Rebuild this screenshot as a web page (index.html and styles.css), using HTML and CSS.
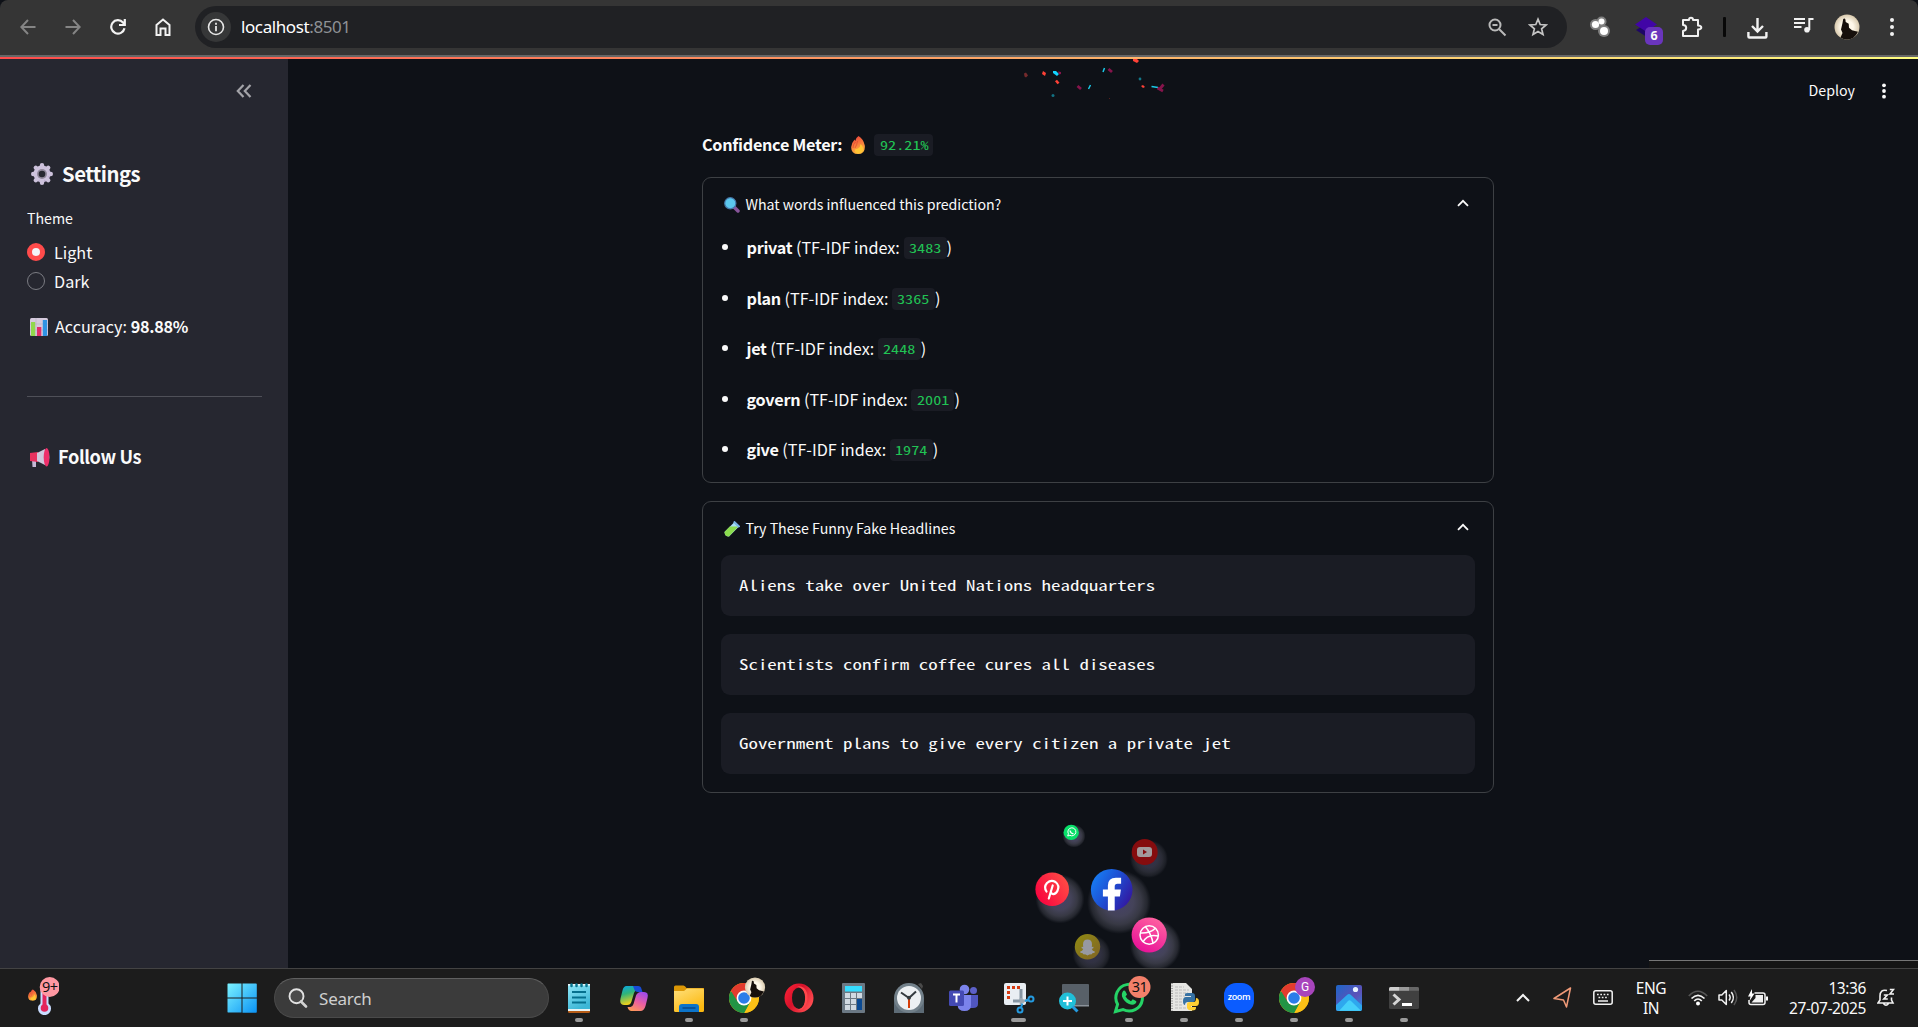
FILE: index.html
```html
<!DOCTYPE html>
<html lang="en">
<head>
<meta charset="utf-8">
<title>localhost:8501</title>
<link rel="stylesheet" href="styles.css">
</head>
<body>
<svg width="0" height="0" class="defs" aria-hidden="true">
  <defs>
    <symbol id="chrome" viewBox="0 0 30 30">
      <circle cx="15" cy="15" r="15" fill="#fbbc04"/>
      <path d="M15 15 L1.6 8.2 A15 15 0 0 0 15.5 30 L21.5 18.8Z" fill="#229445"/>
      <path d="M1.9 7.8 A15 15 0 0 1 28.2 8 L15 8.2 L8.5 18.6Z" fill="#e33b2e"/>
      <path d="M15 8 H28.2 A15 15 0 0 1 15.3 30 L21.5 18.8Z" fill="#fbc116"/>
      <circle cx="15" cy="15" r="7.4" fill="#fff"/><circle cx="15" cy="15" r="5.8" fill="#2b7de9"/>
    </symbol>
    <radialGradient id="avatarBg"><stop offset=".5" stop-color="#fff8ea"/><stop offset="1" stop-color="#d8c9ad"/></radialGradient>
    <symbol id="avatar" viewBox="0 0 26 26">
      <circle cx="13" cy="13" r="12.5" fill="url(#avatarBg)"/>
      <path d="M9.200 5q1.500-1.200 2.200.5l.3 2.500 3 1.800.3 4 3 2.500 6 1.500Q20.500 25.500 13 25.500 9 25.300 6.500 23.500L8.500 19 7 15.500 8.500 9Z" fill="#160f0b"/>
    </symbol>
    <linearGradient id="winG" x2="1" y2="1"><stop stop-color="#7cf3ff"/><stop offset="1" stop-color="#0a92f5"/></linearGradient>
    <linearGradient id="cop1" x1="0" y1="0" x2=".3" y2="1"><stop stop-color="#08a6e8"/><stop offset=".45" stop-color="#2fb47a"/><stop offset="1" stop-color="#f5d319"/></linearGradient>
    <linearGradient id="cop2" x1=".7" y1="0" x2=".2" y2="1"><stop stop-color="#a24be8"/><stop offset=".5" stop-color="#ec5fa0"/><stop offset="1" stop-color="#ff9a55"/></linearGradient>
    <linearGradient id="folder" x2=".6" y2="1"><stop stop-color="#ffe07c"/><stop offset="1" stop-color="#fcb910"/></linearGradient>
    <linearGradient id="opera" x2="1" y2=".6"><stop stop-color="#ff2438"/><stop offset=".5" stop-color="#d6112a"/><stop offset="1" stop-color="#ff4b50"/></linearGradient>
    <linearGradient id="note" y2="1" x2=".5"><stop stop-color="#8fe6f7"/><stop offset="1" stop-color="#3cb6d6"/></linearGradient>
    <linearGradient id="photo" x2="1" y2="1"><stop stop-color="#1e66c8"/><stop offset=".6" stop-color="#5d51b8"/><stop offset="1" stop-color="#2491e6"/></linearGradient>
    <linearGradient id="fb" x1="0" y1=".2" x2="1" y2=".8"><stop stop-color="#1680f5"/><stop offset=".5" stop-color="#1f4bd0"/><stop offset="1" stop-color="#34129b"/></linearGradient>
    <linearGradient id="pin" x1="0" y1=".8" x2="1" y2=".2"><stop stop-color="#f8003f"/><stop offset="1" stop-color="#ff4f45"/></linearGradient>
    <linearGradient id="dri" x1=".2" y1="1" x2=".7" y2="0"><stop stop-color="#e70c97"/><stop offset="1" stop-color="#ff62a0"/></linearGradient>
    <linearGradient id="snap" y2="1"><stop stop-color="#908b12"/><stop offset="1" stop-color="#806326"/></linearGradient>
    <linearGradient id="gearG" x2="1" y2="1"><stop stop-color="#d9d0e6"/><stop offset="1" stop-color="#b5a3cb"/></linearGradient>
    <linearGradient id="fireG" y2="1" x2=".3"><stop stop-color="#e63a3c"/><stop offset=".45" stop-color="#f6713c"/><stop offset="1" stop-color="#ffb23c"/></linearGradient>
    <radialGradient id="glow"><stop offset="0" stop-color="#46416a"/><stop offset=".45" stop-color="#444359"/><stop offset=".7" stop-color="#3a3b47" stop-opacity=".95"/><stop offset=".88" stop-color="#34363f" stop-opacity=".6"/><stop offset="1" stop-color="#2c2e38" stop-opacity="0"/></radialGradient>
    <symbol id="fire" viewBox="0 0 14 18">
      <path d="M7.500 0Q12.500 3 13.800 9.500 14.500 18 7 18 0 18 .2 11 .5 7 3.500 3.500L4.200 5Q5 1.500 7.500 0Z" fill="url(#fireG)"/>
      <path d="M9.500 8Q13 11 12 14.500 10.500 17.500 7.500 17.500 3.500 17 3.800 13.500L7 12.500Q9.500 11 9.500 8Z" fill="#ffc634"/>
      <path d="M2 12Q2 8 4.500 6M4 12Q6 9 6.500 5" stroke="#d9402f" stroke-width=".6" fill="none"/>
    </symbol>
  </defs>
</svg>

<header class="browser">
  <nav class="nav">
    <span class="nav-cell"><svg width="16" height="16" viewBox="0 0 16 16" fill="none" stroke="#858585" stroke-width="2"><path d="M15.500 8H1.500M8 1 1.300 8 8 15"/></svg></span>
    <span class="nav-cell"><svg width="16" height="16" viewBox="0 0 16 16" fill="none" stroke="#858585" stroke-width="2"><path d="M.5 8h14M8 1l6.700 7L8 15"/></svg></span>
    <span class="nav-cell"><svg width="16" height="16" viewBox="0 0 16 16" fill="none" stroke="#f2f2f2" stroke-width="2.200"><path d="M14.500 9.300A6.700 6.700 0 1 1 13 3.500L14.800 5.500M14.800 0V6H9"/></svg></span>
    <span class="nav-cell"><svg width="16" height="18" viewBox="0 0 16 18" fill="none" stroke="#f2f2f2" stroke-width="2"><path d="M1.500 7 8 1.500 14.500 7V17H10.500V10.500h-5V17h-4Z"/></svg></span>
  </nav>
  <div class="address">
    <span class="info"><svg width="18" height="18" viewBox="0 0 18 18"><circle cx="9" cy="9" r="7.500" fill="none" stroke="#e6e6e6" stroke-width="1.600"/><path d="M9 8v5.200M9 4.800v1.900" stroke="#e6e6e6" stroke-width="1.800"/></svg></span>
    <span class="url">localhost<span class="port">:8501</span></span>
    <svg class="zoom-out" width="19" height="19" viewBox="0 0 19 19" fill="none" stroke="#b9b9b9" stroke-width="2"><circle cx="7" cy="7" r="5.500"/><path d="M11 11 17.500 17.500M4.500 7h5"/></svg>
    <svg class="star" width="20" height="20" viewBox="0 0 20 20" fill="none" stroke="#c4c4c4" stroke-width="1.700"><path d="M10 2.200 12.200 7.500 18 8 13.600 11.800 15 17.400 10 14.400 5 17.400 6.400 11.800 2 8 7.800 7.500Z"/></svg>
  </div>
  <div class="extensions">
    <svg width="22" height="22" viewBox="0 0 22 22"><g fill="#999" opacity=".75"><circle cx="6.500" cy="8.500" r="5.500"/><circle cx="12.500" cy="5.500" r="5"/><circle cx="15" cy="15" r="6"/></g><g fill="#fff"><circle cx="6.500" cy="8.500" r="3.600"/><circle cx="12.500" cy="5.500" r="3"/><circle cx="15" cy="15" r="4"/></g></svg>
    <span class="cube"><svg width="22" height="22" viewBox="0 0 22 22"><path d="M1 14 11 8l10 6-10 6.500Z" fill="#1e0666"/><path d="M0 8.500 11 1l11 7.500L11 15.500Z" fill="#4105a6"/></svg><b class="badge">6</b></span>
    <svg class="puzzle" width="22" height="22" viewBox="0 0 22 22" fill="none" stroke="#f0f0f0" stroke-width="2"><path d="M2 4h6Q8 1.800 10 1.800T12 4h5V9.500q3.300.2 3.300 2T17 13.500V20H2V15q3.200-.4 3.200-3.200T2 9Z" stroke-linejoin="round"/></svg>
    <i class="divider"></i>
    <svg class="download" width="21" height="21" viewBox="0 0 21 21" fill="none" stroke="#f2f2f2" stroke-width="2.400"><path d="M10.500 0v13M5 8l5.500 5.500L16 8M1.400 14v4.500q0 1 1 1h16q1 0 1-1V14"/></svg>
    <svg class="music" width="20" height="17" viewBox="0 0 20 17" fill="none" stroke="#f2f2f2" stroke-width="2"><path d="M0 2h11M0 6h11M0 10h7.500M15.300 13V2H19.500"/><circle cx="13" cy="12.700" r="2.800" fill="#f2f2f2" stroke="none"/></svg>
    <svg class="profile" width="26" height="26"><use href="#avatar"/></svg>
    <svg class="more" width="6" height="20" viewBox="0 0 6 20" fill="#f2f2f2"><circle cx="3" cy="3" r="2"/><circle cx="3" cy="10" r="2"/><circle cx="3" cy="17" r="2"/></svg>
  </div>
</header>

<div class="app">
  <aside class="sidebar">
    <div class="collapse"><svg width="16" height="14" viewBox="0 0 16 14" fill="none" stroke="#a3a3a8" stroke-width="2.200"><path d="M7.500 1 1.800 7 7.500 13M14.500 1 8.800 7l5.700 6"/></svg></div>
    <h2 class="settings"><svg width="22" height="22" viewBox="0 0 22 22"><g fill="url(#gearG)"><circle cx="11" cy="11" r="8.500"/><g stroke="#cdc2dc" stroke-width="4.400" stroke-linecap="round"><path d="M11 2.200v17.600M2.200 11h17.600M4.800 4.800l12.400 12.400M17.200 4.800 4.800 17.200"/></g></g><circle cx="11" cy="11" r="5" fill="#8f8799"/><circle cx="11" cy="11" r="3.300" fill="#262730"/></svg><span>Settings</span></h2>
    <div class="theme-label">Theme</div>
    <div class="option"><i class="radio on"></i>Light</div>
    <div class="option"><i class="radio"></i>Dark</div>
    <p class="accuracy"><svg width="18" height="18" viewBox="0 0 18 18"><rect width="18" height="18" rx="1.500" fill="#d5cadd"/><path d="M0 6h18M0 12h18M6 0v18" stroke="#b9aec5" stroke-width=".6"/><rect x="1" y="4" width="4.200" height="14" fill="#91d84c"/><rect x="7" y="9" width="4.300" height="9" fill="#e22e69"/><rect x="12.800" y="2" width="4.300" height="16" fill="#2f94e4"/></svg><span>Accuracy: <b>98.88%</b></span></p>
    <hr>
    <h3 class="follow"><svg width="20" height="19" viewBox="0 0 20 19"><path d="M2 11h4v8H2.500Z" fill="#c5b8d5"/><path d="M0 5 8 4v10L0 13Z" fill="#e8315f"/><path d="M7 5 15 1v16L7 13Z" fill="#cfc7dc"/><ellipse cx="16.600" cy="9.300" rx="2.900" ry="9.200" fill="#ee2f6b"/><path d="M19 7q1.500 2 0 4.500" fill="#696070"/></svg><span>Follow Us</span></h3>
  </aside>

  <main class="main">
    <div class="app-bar"><span>Deploy</span><svg width="6" height="16" viewBox="0 0 6 16" fill="#fafafa"><circle cx="3" cy="2.300" r="1.900"/><circle cx="3" cy="8" r="1.900"/><circle cx="3" cy="13.700" r="1.900"/></svg></div>
    <section class="content">
      <p class="confidence"><b>Confidence Meter:</b><svg width="14" height="18"><use href="#fire"/></svg><code class="percent"><span>92.21%</span></code></p>
      <article class="card words">
        <header class="card-head"><svg width="16" height="16" viewBox="0 0 16 16"><path d="M10 10l4 4" stroke="#87549a" stroke-width="3.500" stroke-linecap="round"/><circle cx="6.300" cy="6.300" r="5.600" fill="#5bc8ee" stroke="#4676a8" stroke-width="1.200"/></svg><span>What words influenced this prediction?</span><svg class="chev" width="12" height="8" viewBox="0 0 12 8"><path d="M1 6.800 6 1.800l5 5" fill="none" stroke="#fafafa" stroke-width="1.800"/></svg></header>
        <ul>
          <li><b>privat</b> (TF-IDF index: <code><span>3483</span></code>)</li>
          <li><b>plan</b> (TF-IDF index: <code><span>3365</span></code>)</li>
          <li><b>jet</b> (TF-IDF index: <code><span>2448</span></code>)</li>
          <li><b>govern</b> (TF-IDF index: <code><span>2001</span></code>)</li>
          <li><b>give</b> (TF-IDF index: <code><span>1974</span></code>)</li>
        </ul>
      </article>
      <article class="card headlines">
        <header class="card-head"><svg width="16" height="16" viewBox="0 0 16 16"><path d="M10 1.500 14.500 6 5 15.500Q1 15.500.5 11Z" fill="#a8dff5"/><path d="M5.800 5.600h8.500L5 15.500Q.5 15.500.5 11Z" fill="#8bdc4e"/><path d="M9.800.5 15.500 6" stroke="#79b5e8" stroke-width="2"/></svg><span>Try These Funny Fake Headlines</span><svg class="chev" width="12" height="8" viewBox="0 0 12 8"><path d="M1 6.800 6 1.800l5 5" fill="none" stroke="#fafafa" stroke-width="1.800"/></svg></header>
        <pre><span>Aliens take over United Nations headquarters</span></pre>
        <pre><span>Scientists confirm coffee cures all diseases</span></pre>
        <pre><span>Government plans to give every citizen a private jet</span></pre>
      </article>
    </section>

    <svg class="confetti" width="150" height="50" viewBox="1020 59 150 50">
      <g fill="#ff4136"><path d="M1042 71l3 2-1 3-3-2Z" transform="translate(1)"/><path d="M1133 58h3l3 3-2 2-4-2Z"/><path d="M1141 86l2-1 2 2-2 1Z"/></g>
      <path d="M1024 73.500l2-1 2 3-2 2-1.500-1Z" fill="#742a2c"/>
      <path d="M1053 71h3l3 3-2 2-4-3Z" fill="#12d3ff"/><path d="M1058 71.500l3 .5v2l-2 .5Z" fill="#85144b"/>
      <path d="M1104.500 68 1103 72M1090.500 85 1088.500 89M1151.500 86.500 1158 87.500" stroke="#1bc9e8" stroke-width="1.500"/>
      <path d="M1108.500 69 1112 72M1077.500 86 1081 89M1157.500 88 1163 91M1163.500 84.500 1159 90" stroke="#85144b" stroke-width="2.800"/>
      <circle cx="1140" cy="79" r="1.400" fill="#137788"/><circle cx="1053" cy="95.500" r="1.500" fill="#127283"/><circle cx="1109.500" cy="98.500" r=".5" fill="#6d2420"/>
      <path d="M1056 80.500 1058.500 83.500" stroke="#ff4136" stroke-width="2.600"/>
    </svg>

    <svg class="social" width="220" height="168" viewBox="1000 800 220 168">
      <g fill="url(#glow)">
        <circle cx="1074" cy="836" r="11.500"/><circle cx="1149" cy="859" r="19" opacity=".65"/><circle cx="1060" cy="899" r="24.500"/><circle cx="1119" cy="902" r="32"/><circle cx="1155.500" cy="945.500" r="25.500"/><circle cx="1091.500" cy="954" r="19" opacity=".65"/>
      </g>
      <circle cx="1071.200" cy="832.400" r="7.700" fill="#08df69"/>
      <path d="M1067.700 836l.7-2.200a4 4 0 1 1 1.500 1.500Z" fill="none" stroke="#fff" stroke-width="1"/><path d="M1070 830.500q.5 3 3.500 3.300" stroke="#fff" stroke-width="1.300" fill="none"/>
      <circle cx="1144.700" cy="852" r="13" fill="#850c0e"/>
      <rect x="1137" y="847" width="15" height="10" rx="3" fill="#a29a9c"/><path d="M1143 849.500v5l4-2.500Z" fill="#850c0e"/>
      <circle cx="1052.200" cy="889.300" r="16.800" fill="url(#pin)"/>
      <path d="M1046.500 891.500q-3-4.500.5-8.500 4-3.500 8.500-1 4.500 3.500 2 8.700-2 4-5 3.300-2-.8-1.600-3M1052.700 885.500 1048.800 898.500" fill="none" stroke="#fff" stroke-width="2.200" stroke-linecap="round"/>
      <circle cx="1111.700" cy="889.700" r="20.800" fill="url(#fb)"/>
      <path d="M1107.900 910.500V896.500h-5V889.500h5v-4q0-7.800 8-7.800h5.200v6h-3.700q-2.700 0-2.700 2.800v3h6.200l-1 7h-5.200v14Z" fill="#fff"/>
      <circle cx="1149.200" cy="935" r="17.600" fill="url(#dri)"/>
      <g fill="none" stroke="#fff" stroke-width="1.500"><circle cx="1149.200" cy="935" r="9.200"/><path d="M1140.200 933q10 .5 15.500-5M1145.500 926.700q6 7.500 7.500 16.500M1143 942q4.500-8.500 15.300-6"/></g>
      <circle cx="1087.500" cy="946.700" r="12.700" fill="url(#snap)"/>
      <path d="M1087.500 939.500q4.500 0 4.500 5l-.2 2.500 1.500-.3.200 1.200-1.700 1q.7 2 3 2.600l-.2 1.300-2.300.4-.5 1-2.500.2-1.800 1.200-1.800-1.200-2.500-.2-.5-1-2.300-.4-.2-1.300q2.300-.6 3-2.600l-1.700-1 .2-1.200 1.500.3-.2-2.500q0-5 4.500-5Z" fill="#9799a2"/>
    </svg>
    <div class="window-edge"></div>
  </main>
</div>

<footer class="taskbar">
  <svg class="weather" width="34" height="40" viewBox="25 975 34 40"><svg x="28" y="989" width="9" height="12" viewBox="0 0 14 18"><use href="#fire" width="14" height="18"/></svg><path d="M40.500 1003.500V985h8v18.500a6.500 6.500 0 1 1-8 0Z" fill="#c9dcff"/><circle cx="44.500" cy="1008" r="3.800" fill="#e3245c"/><path d="M44.500 992v14" stroke="#e3245c" stroke-width="4"/><circle cx="49.700" cy="987" r="10" fill="#ff98a2"/><text x="49.800" y="992.300" text-anchor="middle" class="badge-text">9+</text></svg>
  <svg class="start" width="30" height="30" viewBox="0 0 30 30"><path d="M1 .5h13.500v14H.5V1ZM15.500.5H29a.8.800 0 0 1 .8.800v13.200H15.500ZM.5 15.500h14v14H1a.8.800 0 0 1-.5-.8ZM15.500 15.500h14.300V29q0 .7-.8.700H15.500Z" fill="url(#winG)"/></svg>
  <div class="search"><svg width="20" height="20" viewBox="0 0 20 20" fill="none"><circle cx="8.500" cy="8.200" r="7" stroke="#e2e2e2" stroke-width="1.900" fill="#4b4b4b"/><path d="M13 13.500 18 18.500" stroke="#d2d2d2" stroke-width="2.600" stroke-linecap="round"/></svg><span>Search</span></div>
  <div class="apps">
    <span class="task run"><svg width="36" height="38" viewBox="0 0 36 38"><rect x="7" y="7" width="22" height="28" rx="1.500" fill="#b65c17"/><rect x="7" y="6" width="22" height="27" fill="#e8f4f6"/><path d="M7 7.500h22V31H7Z" fill="url(#note)"/><path d="M11 14h14M11 19.500h14M11 24.500h14" stroke="#05708e" stroke-width="2"/><g stroke="#07758f" stroke-width="2.500" stroke-linecap="round"><path d="M10.500 6.500v1.500M15.500 6.500v1.500M20.500 6.500v1.500M25.500 6.500v1.500"/></g></svg></span>
    <span class="task"><svg width="36" height="38" viewBox="0 0 36 38"><path d="M10.500 8H20q3 0 4 4h-3q-2 0-3 3l-2.500 8.500Q14.500 27 11 27H8Q3 27 4.500 20.500l2-8Q7.500 8 10.500 8Z" fill="url(#cop1)"/><path d="M17 8h5q3 0 3.500 3l1 3h-5q-2 0-3-2Z" fill="#184cd6"/><path d="M25 14h3q5 0 3.500 6l-2 8q-1.500 5-5 5h-9q-3 0-4-4h3q2 0 3-3l2.500-8.500Q21.500 14 25 14Z" fill="url(#cop2)"/></svg></span>
    <span class="task run"><svg width="36" height="38" viewBox="0 0 36 38"><path d="M3 9q0-1.500 1.500-1.500h8q1.500 0 3 2.500H33v8H3Z" fill="#dc9705"/><path d="M3 13h10l3-2.500h15.500q1.500 0 1.500 1.500v20.500q0 1.500-1.500 1.500h-27Q3 34 3 32.500Z" fill="url(#folder)"/><path d="M8 34v-5q0-3 3-3h14q3 0 3 3v5Z" fill="#0c74ca"/><path d="M11.500 30h13" stroke="#07488a" stroke-width="1.500"/></svg></span>
    <span class="task run"><svg width="40" height="38" viewBox="-2 0 40 38"><use href="#chrome" x="3" y="5" width="30" height="30"/><use href="#avatar" x="18.500" y="-1" width="21" height="21"/></svg></span>
    <span class="task"><svg width="36" height="38" viewBox="0 0 36 38"><path fill-rule="evenodd" d="M18 5.500a14.500 14.500 0 1 0 0 29 14.500 14.500 0 0 0 0-29ZM18 9.500q6.500 1.500 6.500 10.500T18 31q-7-1.500-7-11T18 9.500Z" fill="url(#opera)"/><path d="M16 9q3-2 7 1 4 4 3.500 10.500T21 31.500q-3 .8-5-.5 6 1 7.500-6t-1-12Q20 9 16 9Z" fill="#ff484c"/></svg></span>
    <span class="task"><svg width="36" height="38" viewBox="1 0 36 38"><rect x="7" y="5" width="23" height="30" rx="1" fill="#6b7884"/><rect x="10" y="8" width="17" height="5.500" fill="#35dcff"/><g fill="#d0d9e2"><path d="M10 15h5v5h-5ZM16 15h5v5h-5ZM22 15h5v5h-5ZM10 21h5v5h-5ZM16 21h5v5h-5ZM10 27h5v5h-5ZM16 27h5v5h-5Z"/></g><path d="M22 21h5v11h-5Z" fill="#0b4a93"/></svg></span>
    <span class="task"><svg width="36" height="38" viewBox="0 0 36 38"><path d="M3 20h30v15H3Z" fill="#5d6b76"/><circle cx="18" cy="20" r="15" fill="#72808a"/><path d="m27 6 3-1 2 3-1 3Z" fill="#4a4a4a"/><circle cx="18" cy="20" r="12" fill="#edf0f3"/><path d="M10 14.500 18 20l7-6.500" stroke="#343a3f" stroke-width="2" fill="none"/><path d="M18 21v9" stroke="#d63d09" stroke-width="2"/><circle cx="18" cy="19.800" r="2" fill="#343a3f"/></svg></span>
    <span class="task"><svg width="36" height="38" viewBox="0 0 36 38"><circle cx="27.500" cy="12.500" r="3.500" fill="#5d61c8"/><path d="M23 17h9v9q0 4-5 4h-3Z" fill="#5056bf"/><circle cx="18.500" cy="11.500" r="4.800" fill="#7b83eb"/><path d="M13 17h12v10q0 6-6.500 6t-7-6Z" fill="#7b83eb"/><rect x="3" y="12.500" width="15" height="15.500" rx="1.500" fill="#444ab4"/><path d="M7 16.500h7M10.500 16v8.500" stroke="#fff" stroke-width="2"/></svg></span>
    <span class="task run wide"><svg width="36" height="38" viewBox="0 0 36 38"><rect x="3" y="5" width="22" height="22" rx="2" fill="#e9eef3"/><path d="M20 11v12M12 23h11" stroke="#8796a3" stroke-width="3"/><path d="M7.500 21V9.500H19" stroke="#d53b12" stroke-width="3" fill="none" stroke-dasharray="3 2"/><path d="M20 20v7M21 23.500 27 22" stroke="#9aa6b0" stroke-width="2.500"/><g fill="none" stroke="#249be0" stroke-width="2"><circle cx="30" cy="21" r="2.500"/><circle cx="19" cy="32" r="2.500"/><path d="M20 29.500l1.500-4M27.500 21.800 24 23"/></g></svg></span>
    <span class="task"><svg width="36" height="38" viewBox="0 0 36 38"><rect x="6" y="6" width="27" height="22" rx="1" fill="#586068"/><path d="M6 27h27v1.500H6Z" fill="#8b929a"/><circle cx="11.500" cy="23" r="8.500" fill="#20bfd8"/><path d="M16.500 28.500 21.500 33.500" stroke="#249be0" stroke-width="3"/><path d="M11.500 18.500v9M7 23h9" stroke="#fff" stroke-width="2"/></svg></span>
    <span class="task run"><svg width="44" height="38" viewBox="-4 0 44 38"><path d="M4.500 33.500 6.600 26.300A13.300 13.300 0 1 1 12 31.500Z" fill="none" stroke="#25d366" stroke-width="3"/><path d="M11.500 14q1.500-2.500 3-.5l1.500 3-1.500 2q2 3.500 5.500 4.700l1.700-2 3.300 1.700q1.200.8-.5 2.600-2.500 2.300-6.500.5-5-2.300-7-7.500-.6-2.500.5-4.500Z" fill="#25d366"/><circle cx="28.500" cy="9" r="11" fill="#f3806a"/><text x="28.500" y="14" text-anchor="middle" class="badge-text">31</text></svg></span>
    <span class="task run"><svg width="36" height="38" viewBox="0 0 36 38"><path d="M5 5h15l6 6v22H5Z" fill="#e6e6e3"/><path d="M6 5v28" stroke="#888" stroke-width="1.500" stroke-dasharray="1 1.500"/><path d="M9 9h9M9 12h14M9 15h13M9 18h10M9 21h7M9 24h9M9 27h8M9 30h12" stroke="#bbb" stroke-dasharray="3 1"/><path d="M22 15h4q3 0 3 3v4q0 2-2 2h-5q-3 0-3 3-2 0-2-4t3-4h5v-1h-6v-2q0-1 3-1Z" fill="#3672a4"/><path d="M30 20q3 0 3 4t-3 4h-5v1h5v1q0 2.500-4 2.500t-5-2.500v-4q0-2 3-2h4q2 0 2-4Z" fill="#ffd034"/></svg></span>
    <span class="task run"><svg width="36" height="38" viewBox="0 0 36 38"><rect x="3" y="5" width="30" height="30" rx="12" fill="#0b5cff"/><text x="18" y="21.800" text-anchor="middle" class="zoom-text">zoom</text></svg></span>
    <span class="task run"><svg width="40" height="38" viewBox="-2 0 40 38"><use href="#chrome" x="3" y="5" width="30" height="30"/><circle cx="29" cy="9" r="10" fill="#a845bc"/><text x="29" y="13.300" text-anchor="middle" class="g-text">G</text></svg></span>
    <span class="task run"><svg width="36" height="38" viewBox="0 0 36 38"><rect x="5" y="7" width="26" height="26" rx="2" fill="url(#photo)"/><path d="M5 27 16 17q2-2 4 0l11 10.500V31q0 2-2 2H7q-2 0-2-2Z" fill="#2ea8ee"/><path d="M8 33 17 23q1.500-1.500 3 0l10 9.700H8Z" fill="#45d0fa"/><circle cx="24.500" cy="11.500" r="2.600" fill="#e9f3ff"/></svg></span>
    <span class="task run"><svg width="36" height="38" viewBox="0 0 36 38"><rect x="3" y="9" width="30" height="22" rx="1.500" fill="#404040"/><path d="M3 12.800V10.500Q3 9 4.500 9H13v3.800Z" fill="#cfcfcf"/><path d="M13 9h10v3.800H13Z" fill="#9a9a9a"/><path d="M23 9h8.500Q33 9 33 10.500v2.300H23Z" fill="#666"/><path d="M7.500 16.500l5.500 5-5.500 5" fill="none" stroke="#d5d5d5" stroke-width="3"/><path d="M16 26.500h10" stroke="#fff" stroke-width="3"/></svg></span>
  </div>
  <div class="tray">
    <svg width="14" height="9" viewBox="0 0 14 9"><path d="M1 8l6-6 6 6" fill="none" stroke="#f2f2f2" stroke-width="2"/></svg>
    <svg class="loc" width="19" height="21" viewBox="0 0 19 21"><path d="M17.500 1 1 11.500l9.500 1.500 3 7Z" fill="none" stroke="#f09a78" stroke-width="1.500" stroke-linejoin="round"/></svg>
    <svg class="kbd" width="20" height="15" viewBox="0 0 20 15"><rect x=".8" y=".8" width="18.400" height="13.400" rx="2" fill="none" stroke="#f2f2f2" stroke-width="1.500"/><path d="M4 4.500h13M5.500 7.500h10" stroke="#f2f2f2" stroke-width="1.700" stroke-dasharray="1.700 1.600"/><path d="M5 11h10" stroke="#f2f2f2" stroke-width="1.500"/></svg>
    <div class="lang">ENG<br>IN</div>
    <svg class="wifi" width="20" height="16" viewBox="0 0 20 16" fill="none" stroke-width="1.700"><path d="M.8 6q9-9.500 18.400 0" stroke="#555"/><path d="M3.500 8.500q6.500-6.500 13 0M6.200 11q3.800-4 7.600 0" stroke="#f2f2f2"/><circle cx="10" cy="13.500" r="2" fill="#fff"/></svg>
    <svg class="vol" width="20" height="17" viewBox="0 0 20 17" fill="none" stroke="#f2f2f2" stroke-width="1.500"><path d="M1 6h2.800L8.300 1.500v14L3.800 11H1Z" stroke-linejoin="round"/><path d="M11 5.500q2.300 3 0 6M13.300 3q4.200 5.500 0 11"/><path d="M16 1q5.500 7.500 0 15" stroke="#555"/></svg>
    <svg class="bat" width="21" height="17" viewBox="0 0 21 17"><path d="M6.500 4H15q2 0 2 2v7.500q0 2-2 2H3q-2 0-2-2V11" fill="none" stroke="#f2f2f2" stroke-width="1.500"/><path d="M7.500 6H15v7.500H3.500L7.500 9Z" fill="#f2f2f2"/><path d="M18 7.500h2v4h-2ZM4 0 0 7.500h2.500L1.500 12 6.500 4.500H4Z" fill="#fff"/></svg>
    <div class="clock">13:36<br>27-07-2025</div>
    <svg class="bell" width="18" height="19" viewBox="0 0 18 19" fill="none" stroke="#f2f2f2" stroke-width="1.600"><path d="M10 2.500Q3 1 3 8v4l-2 3h15l-1.500-3V9.500M6.500 15.500q2.500 3.500 5 0"/><path d="M6.800 7h3.500l-3.500 4h4M12.800 1.500H16.500l-3.500 4.500h4"/></svg>
  </div>
</footer>
</body>
</html>
```
FILE: styles.css
```css
* { box-sizing: border-box; }
html, body { margin: 0; height: 100%; overflow: hidden; }
body {
  display: flex; flex-direction: column;
  background: #0e1117; color: #fafafa;
  font-family: "Noto Sans CJK SC", "Noto Sans", sans-serif;
  font-size: 16.2px; line-height: 28px;
}
svg { display: block; flex: none; }
.defs { position: absolute; }
h2, h3, p, ul, pre { margin: 0; padding: 0; }
b { letter-spacing: -0.270px; }

.browser {
  flex: none; height: 57px; display: flex; align-items: flex-start;
  background: #353535; border-bottom: 2px solid #666; padding-left: 5px;
  font-family: "Noto Sans", sans-serif;
  border-radius: 8px 8px 0 0;
}
.nav { display: flex; height: 53px; }
.nav-cell { width: 45px; display: flex; align-items: center; justify-content: center; }
.address {
  margin: 6px 0 0 10px; width: 1372px; height: 42px; border-radius: 21px;
  background: #202124; display: flex; align-items: center; padding-left: 6px;
}
.info { width: 30px; height: 30px; border-radius: 50%; background: #363738; display: flex; align-items: center; justify-content: center; }
.url { margin-left: 10px; font-size: 17px; letter-spacing: -0.400px; color: #fff; line-height: 42px; }
.port { color: #8e9195; }
.zoom-out { margin-left: auto; margin-right: 21px; }
.star { margin-right: 19px; }
.extensions { display: flex; align-items: center; height: 54px; padding-left: 22px; }
.cube { position: relative; margin-left: 24px; }
.badge {
  position: absolute; left: 10px; top: 11px; width: 18px; height: 18px; border-radius: 5px;
  background: #6a35bd; font-size: 12.500px; line-height: 18px; text-align: center;
}
.puzzle { margin-left: 24px; }
.divider { width: 3px; height: 20px; margin-left: 20px; background: #080808; border-radius: 1px; }
.download { margin-left: 21px; margin-top: 2px; }
.music { margin-left: 26px; margin-bottom: 3px; }
.profile { margin-left: 20px; }
.more { margin-left: 29px; }

.app { flex: 1; display: flex; min-height: 0; position: relative; }
.app::before { content: ""; position: absolute; left: 0; right: 0; top: 0; height: 2px; z-index: 2; background: linear-gradient(90deg, #ff4b4b, #fffd80); }

.sidebar { width: 288px; flex: none; background: #262730; padding: 0 26px 0 27px; }
.collapse { display: flex; justify-content: flex-end; padding: 27px 10px 0 0; height: 101px; }
.settings { display: flex; align-items: center; gap: 9px; padding-left: 4px; height: 32px; font-size: 20.300px; letter-spacing: -0.500px; }
.settings span, .follow span, .accuracy span, .card-head span, .app-bar span { margin-top: -2px; }
.theme-label { margin-top: 15px; height: 26px; line-height: 26px; font-size: 14.200px; }
.option { display: flex; align-items: center; gap: 9px; height: 29px; }
.theme-label + .option { margin-top: 6px; }
.option { line-height: 26px; }
.radio { width: 18px; height: 18px; border-radius: 50%; border: 1px solid #7b7c83; }
.radio.on { border: 5.500px solid #ff4b4b; background: #f3f4f8; }
.accuracy { display: flex; align-items: center; gap: 7px; padding-left: 3px; margin-top: 18px; height: 28px; }
.sidebar hr { margin: 55px 0 0; border: 0; height: 1px; background: #4f5058; }
.follow { display: flex; align-items: center; gap: 8px; padding-left: 3px; margin-top: 46px; height: 28px; font-size: 18.200px; letter-spacing: -0.400px; }

.main { flex: 1; position: relative; overflow: hidden; }
.app-bar { display: flex; justify-content: flex-end; align-items: center; gap: 26px; height: 67px; padding-right: 31px; font-size: 14.200px; }
.content { width: 792px; margin-left: 414px; padding-top: 7px; }
.confidence { display: flex; align-items: center; height: 28px; }
.confidence b { margin-top: -2px; }
.confidence svg { margin-left: 9px; }
.confidence code { margin-left: 9px; }
code {
  width: 43px; height: 22px; line-height: 23px; padding-left: 5.400px; border-radius: 4px;
  background: #1a1c24; color: #21c354;
}
.percent { width: 59px; }
code span, pre span {
  display: inline-block; transform: scaleX(1.320); transform-origin: 0 50%;
  font-family: "Noto Sans Mono CJK SC", "DejaVu Sans Mono", monospace; vertical-align: top;
}
code span { font-size: 12.270px; }
.card { border: 1px solid #3d4044; border-radius: 9px; }
.words { margin-top: 18px; height: 306px; }
.headlines { margin-top: 18px; height: 292px; padding-bottom: 18px; }
.card-head { display: flex; align-items: center; gap: 5.500px; height: 53px; padding: 0 24px 0 21px; font-size: 14.200px; }
.card-head span { letter-spacing: -0.030px; }
.card-head .chev { margin: -3px 0 0 auto; }
ul { list-style: none; margin-top: -9px; padding-left: 19px; }
li { display: flex; align-items: center; height: 50.500px; white-space: pre; }
li::before { content: ""; width: 6px; height: 6px; border-radius: 50%; background: #fafafa; margin-right: 18.500px; flex: none; }
li code { margin-top: 2px; }
pre {
  margin: 0 18px 18px; height: 61px; padding-left: 18px; line-height: 60px; border-radius: 9px; background: #1a1c24;
}
pre span { font-size: 14.330px; }
.confetti { position: absolute; left: 732px; top: 2px; }
.social { position: absolute; left: 712px; top: 743px; }
.window-edge { position: absolute; right: 0; bottom: 0; width: 269px; height: 8px; background: #151515; border-top: 1px solid #777; }

.taskbar {
  flex: none; height: 59px; display: flex; align-items: center; position: relative;
  background: #1c1c1c; border-top: 1px solid #434343; font-family: "Noto Sans", sans-serif; padding-bottom: 1px;
}
.weather { margin-left: 25px; margin-bottom: 5px; }
.start { margin-left: 168px; }
.search {
  margin-left: 17px; width: 275px; height: 40px; border-radius: 20px; background: #3b3b3b; border: 1px solid #4a4a4a; border-top-color: #606060;
  display: flex; align-items: center; padding-left: 14px; gap: 11px; font-size: 17px; color: #cfcfcf;
}
.search span { letter-spacing: -0.200px; margin-top: 2px; }
.search svg { margin-left: -1px; }
.apps { display: flex; margin-left: 2px; height: 58px; }
.task { width: 55px; display: flex; flex-direction: column; align-items: center; padding-top: 9px; }
.task svg { overflow: visible; }
.run::after { content: ""; width: 8px; height: 4px; border-radius: 2px; background: #9a9a9a; margin-top: 2px; }
.wide::after { width: 15px; }
.badge-text { font: 14.500px "Noto Sans", sans-serif; fill: #111; letter-spacing: -0.500px; }
.zoom-text { font: 600 9px "Open Sans", sans-serif; fill: #fff; letter-spacing: -0.300px; }
.g-text { font: 12px Roboto, sans-serif; fill: #fff; }
.tray { flex: 1; display: flex; align-items: center; padding-left: 85px; font-size: 15.500px; line-height: 20px; }
.loc { margin-left: 23px; }
.kbd { margin-left: 21px; }
.lang { width: 40px; margin-left: 18px; text-align: center; letter-spacing: -0.400px; }
.wifi { margin-left: 17px; }
.vol { margin-left: 10px; }
.bat { margin-left: 10px; }
.clock { width: 97px; text-align: right; letter-spacing: -0.400px; }
.bell { margin-left: 11px; }
```
